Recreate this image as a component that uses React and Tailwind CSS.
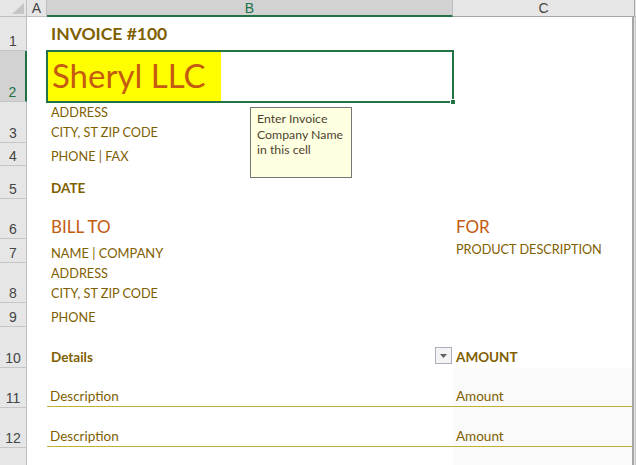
import React from 'react';

const ink = 'text-[#7f6000]';
const orange = 'text-[#c55a11]';

const RowHead = ({ n, h, sel }) => (
    <div
        className={`${h} w-[27px] shrink-0 flex items-end justify-center pb-[2px] border-b border-[#c6c6c6] text-[14px] leading-none font-['Liberation_Sans',sans-serif] ${
            sel
                ? 'bg-[#d2d2d2] border-r-2 border-r-[#217346] text-[#217346]'
                : 'bg-[#e6e6e6] border-r border-r-[#bfbfbf] text-[#444]'
        }`}
    >
        {n}
    </div>
);

const Edge = () => (
    <>
        <div className="w-[2px] shrink-0 bg-[#a6a6a6]" />
        <div className="flex-1 bg-[#e4e4e4] border-r border-[#c8c8c8]" />
    </>
);

const App = () => {
    return (
        <div className="relative w-[636px] h-[465px] overflow-hidden bg-white font-['Lato',sans-serif]">
            {/* Column headers */}
            <div className="flex h-[17px] bg-[#e6e6e6] text-[14px] leading-none font-['Liberation_Sans',sans-serif] text-[#444]">
                <div className="w-[27px] shrink-0 border-r border-b border-[#bfbfbf] flex items-end justify-end pr-[2px] pb-[2px]">
                    <svg width="12" height="11" viewBox="0 0 12 11">
                        <polygon points="12,0 12,11 0,11" fill="#c4c4c4" />
                    </svg>
                </div>
                <div className="w-[20px] shrink-0 border-r border-b border-[#bfbfbf] flex items-center justify-center">A</div>
                <div className="w-[406px] shrink-0 bg-[#d2d2d2] border-r border-[#bfbfbf] border-b-2 border-b-[#217346] flex items-center justify-center text-[#217346]">
                    B
                </div>
                <div className="w-[182px] shrink-0 border-r border-b border-[#a6a6a6] flex items-center justify-center">C</div>
                <div className="flex-1 border-b border-[#bfbfbf]" />
            </div>

            {/* Row 1 */}
            <div className="flex">
                <RowHead n="1" h="h-[34px]" />
                <div className="w-[20px] shrink-0" />
                <div className={`w-[406px] shrink-0 flex items-end pl-[4px] pb-[9px] text-[17.5px] leading-none font-bold ${ink}`}>
                    INVOICE #100
                </div>
                <div className="w-[179px] shrink-0" />
                <Edge />
            </div>

            {/* Row 2 - selected */}
            <div className="flex">
                <RowHead n="2" h="h-[51px]" sel />
                <div className="w-[20px] shrink-0" />
                <div className="relative w-[406px] shrink-0 flex">
                    <div className={`w-[174px] h-full bg-[#ffff00] flex items-end pl-[5px] pb-[10px] text-[33px] leading-none ${orange}`}>
                        Sheryl LLC
                    </div>
                    <div className="absolute -inset-[1px] border-2 border-[#217346]" />
                    <div className="absolute right-[-3px] bottom-[-3px] w-[6px] h-[6px] bg-[#217346] border border-white" />
                </div>
                <div className="w-[179px] shrink-0" />
                <Edge />
            </div>

            {/* Row 3 */}
            <div className="flex">
                <RowHead n="3" h="h-[41px]" />
                <div className="w-[20px] shrink-0" />
                <div className={`w-[406px] shrink-0 flex flex-col justify-end pl-[4px] pb-[1px] text-[12.7px] leading-[20px] ${ink}`}>
                    <span>ADDRESS</span>
                    <span>CITY, ST ZIP CODE</span>
                </div>
                <div className="w-[179px] shrink-0" />
                <Edge />
            </div>

            {/* Row 4 */}
            <div className="flex">
                <RowHead n="4" h="h-[23px]" />
                <div className="w-[20px] shrink-0" />
                <div className={`w-[406px] shrink-0 flex items-end pl-[4px] text-[12.7px] leading-[20px] ${ink}`}>
                    PHONE | FAX
                </div>
                <div className="w-[179px] shrink-0" />
                <Edge />
            </div>

            {/* Row 5 */}
            <div className="flex">
                <RowHead n="5" h="h-[33px]" />
                <div className="w-[20px] shrink-0" />
                <div className={`w-[406px] shrink-0 flex items-end pl-[4px] pb-[1px] text-[13.5px] leading-[20px] font-bold ${ink}`}>
                    DATE
                </div>
                <div className="w-[179px] shrink-0" />
                <Edge />
            </div>

            {/* Row 6 */}
            <div className="flex">
                <RowHead n="6" h="h-[40px]" />
                <div className="w-[20px] shrink-0" />
                <div className={`w-[406px] shrink-0 flex items-end pl-[4px] pb-[4px] text-[17px] leading-none ${orange}`}>
                    BILL TO
                </div>
                <div className={`w-[179px] shrink-0 flex items-end pl-[3px] pb-[4px] text-[17px] leading-none ${orange}`}>
                    FOR
                </div>
                <Edge />
            </div>

            {/* Row 7 */}
            <div className="flex">
                <RowHead n="7" h="h-[24px]" />
                <div className="w-[20px] shrink-0" />
                <div className={`w-[406px] shrink-0 flex items-end pl-[4px] text-[12.9px] leading-[20px] ${ink}`}>
                    NAME | COMPANY
                </div>
                <div className={`w-[179px] shrink-0 flex items-start pl-[3px] text-[12.7px] leading-[20px] ${ink}`}>
                    PRODUCT DESCRIPTION
                </div>
                <Edge />
            </div>

            {/* Row 8 */}
            <div className="flex">
                <RowHead n="8" h="h-[40px]" />
                <div className="w-[20px] shrink-0" />
                <div className={`w-[406px] shrink-0 flex flex-col justify-end pl-[4px] text-[12.7px] leading-[20px] ${ink}`}>
                    <span>ADDRESS</span>
                    <span>CITY, ST ZIP CODE</span>
                </div>
                <div className="w-[179px] shrink-0" />
                <Edge />
            </div>

            {/* Row 9 */}
            <div className="flex">
                <RowHead n="9" h="h-[24px]" />
                <div className="w-[20px] shrink-0" />
                <div className={`w-[406px] shrink-0 flex items-end pl-[4px] text-[12.7px] leading-[20px] ${ink}`}>
                    PHONE
                </div>
                <div className="w-[179px] shrink-0" />
                <Edge />
            </div>

            {/* Row 10 */}
            <div className="flex">
                <RowHead n="10" h="h-[41px]" />
                <div className="w-[20px] shrink-0" />
                <div className={`w-[406px] shrink-0 flex items-end justify-between pl-[4px] pb-[1px] text-[13.5px] leading-[20px] font-bold ${ink}`}>
                    <span>Details</span>
                    <div className="mb-[3px] mr-[1px] w-[17px] h-[17px] border border-[#a9b0ba] bg-[#f4f4f4] flex items-center justify-center">
                        <svg width="7" height="4" viewBox="0 0 7 4">
                            <polygon points="0,0 7,0 3.5,4" fill="#606060" />
                        </svg>
                    </div>
                </div>
                <div className={`w-[179px] shrink-0 flex items-end pl-[3px] pb-[1px] text-[13.5px] leading-[20px] font-bold ${ink}`}>
                    AMOUNT
                </div>
                <Edge />
            </div>

            {/* Row 11 */}
            <div className="flex">
                <RowHead n="11" h="h-[40px]" />
                <div className="w-[20px] shrink-0" />
                <div className={`w-[406px] h-[39px] shrink-0 flex items-end pl-[3px] text-[13.5px] leading-[20px] border-b border-[#bfb034] ${ink}`}>
                    Description
                </div>
                <div className="w-[179px] shrink-0 bg-[#fafafa]">
                    <div className={`h-[39px] flex items-end pl-[3px] text-[13.5px] leading-[20px] border-b border-[#bfb034] ${ink}`}>
                        Amount
                    </div>
                </div>
                <Edge />
            </div>

            {/* Row 12 */}
            <div className="flex">
                <RowHead n="12" h="h-[40px]" />
                <div className="w-[20px] shrink-0" />
                <div className={`w-[406px] h-[39px] shrink-0 flex items-end pl-[3px] text-[13.5px] leading-[20px] border-b border-[#bfb034] ${ink}`}>
                    Description
                </div>
                <div className="w-[179px] shrink-0 bg-[#fafafa]">
                    <div className={`h-[39px] flex items-end pl-[3px] text-[13.5px] leading-[20px] border-b border-[#bfb034] ${ink}`}>
                        Amount
                    </div>
                </div>
                <Edge />
            </div>

            {/* Row 13, cut off by the window */}
            <div className="flex">
                <RowHead n="" h="h-[40px]" />
                <div className="w-[20px] shrink-0" />
                <div className="w-[406px] shrink-0" />
                <div className="w-[179px] shrink-0 bg-[#fafafa]" />
                <Edge />
            </div>

            {/* Input message tooltip */}
            <div className="absolute left-[250px] top-[107px] w-[102px] h-[71px] bg-[#ffffe1] border border-[#767676] px-[6px] pt-[3px] text-[12.3px] leading-[15.5px] text-[#4e4330]">
                Enter Invoice
                <br />
                Company Name
                <br />
                in this cell
            </div>
        </div>
    );
};

export default App;
